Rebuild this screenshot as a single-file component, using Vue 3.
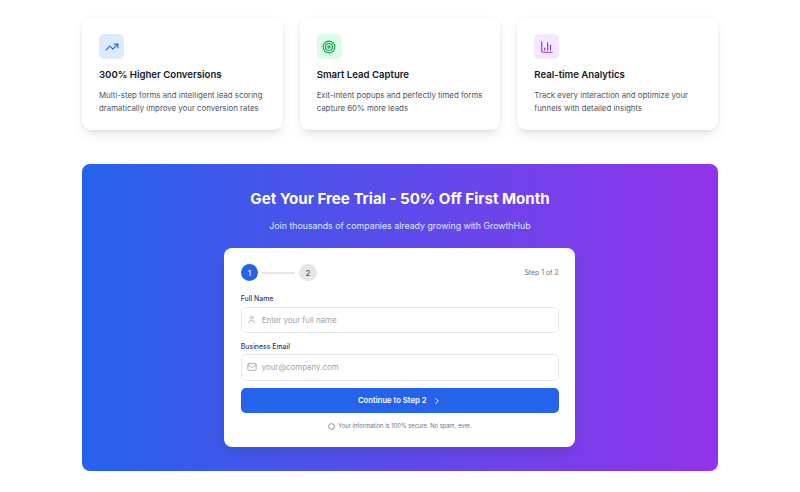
<script setup>
const features = [
  { title: '300% Higher Conversions', lines: 'Multi-step forms and intelligent lead scoring dramatically improve your conversion rates', tone: 'blue', kind: 'trend' },
  { title: 'Smart Lead Capture', lines: 'Exit-intent popups and perfectly timed forms capture 60% more leads', tone: 'green', kind: 'target' },
  { title: 'Real-time Analytics', lines: 'Track every interaction and optimize your funnels with detailed insights', tone: 'purple', kind: 'chart' }
]
</script>

<template>
  <div class="page">
    <section class="features">
      <article v-for="f in features" :key="f.title" class="card">
        <div class="icon" :class="f.tone">
          <svg v-if="f.kind === 'trend'" viewBox="0 0 24 24" width="14" height="14" fill="none" stroke="currentColor" stroke-width="2" stroke-linecap="round" stroke-linejoin="round"><path d="M22 7 13.5 15.5 8.5 10.5 2 17" /><path d="M16 7h6v6" /></svg>
          <svg v-else-if="f.kind === 'target'" viewBox="0 0 24 24" width="14" height="14" fill="none" stroke="currentColor" stroke-width="2"><circle cx="12" cy="12" r="10" /><circle cx="12" cy="12" r="6" /><circle cx="12" cy="12" r="2" /></svg>
          <svg v-else viewBox="0 0 24 24" width="14" height="14" fill="none" stroke="currentColor" stroke-width="2" stroke-linecap="round" stroke-linejoin="round"><path d="M3 3v16a2 2 0 0 0 2 2h16" /><path d="M8 17v-3" /><path d="M13 17V5" /><path d="M18 17V9" /></svg>
        </div>
        <h3>{{ f.title }}</h3>
        <p>{{ f.lines }}</p>
      </article>
    </section>

    <section class="cta">
      <h2>Get Your Free Trial - 50% Off First Month</h2>
      <p class="sub">Join thousands of companies already growing with GrowthHub</p>

      <form class="form" @submit.prevent>
        <div class="steps">
          <div class="track">
            <span class="dot on">1</span>
            <span class="line"></span>
            <span class="dot">2</span>
          </div>
          <span class="count">Step 1 of 2</span>
        </div>

        <label class="label" for="fn">Full Name</label>
        <div class="field">
          <span class="glyph">
            <svg viewBox="0 0 24 24" width="9" height="9" fill="none" stroke="currentColor" stroke-width="2" stroke-linecap="round" stroke-linejoin="round"><path d="M19 21v-2a4 4 0 0 0-4-4H9a4 4 0 0 0-4 4v2" /><circle cx="12" cy="7" r="4" /></svg>
          </span>
          <input id="fn" type="text" placeholder="Enter your full name" />
        </div>

        <label class="label" for="em">Business Email</label>
        <div class="field">
          <span class="glyph">
            <svg viewBox="0 0 24 24" width="10" height="10" fill="none" stroke="currentColor" stroke-width="2" stroke-linecap="round" stroke-linejoin="round"><rect x="2" y="4" width="20" height="16" rx="2" /><path d="m22 7-8.97 5.7a1.94 1.94 0 0 1-2.06 0L2 7" /></svg>
          </span>
          <input id="em" type="email" placeholder="your@company.com" />
        </div>

        <button type="submit" class="submit">
          Continue to Step 2
          <svg viewBox="0 0 24 24" width="10" height="10" fill="none" stroke="currentColor" stroke-width="2.4" stroke-linecap="round" stroke-linejoin="round"><path d="m9 18 6-6-6-6" /></svg>
        </button>

        <p class="note">
          <svg viewBox="0 0 24 24" width="7" height="7" fill="none" stroke="currentColor" stroke-width="2.6"><circle cx="12" cy="12" r="10" /></svg>
          Your information is 100% secure. No spam, ever.
        </p>
      </form>
    </section>
  </div>
</template>

<style>
body { background: #ffffff; }
</style>

<style scoped>
.page {
  box-sizing: border-box;
  width: 800px;
  height: 492px;
  padding: 17px 82px 0;
  font-family: Inter, "Noto Sans", sans-serif;
  background: #fff;
  overflow: hidden;
}
.features {
  display: grid;
  grid-template-columns: repeat(3, 1fr);
  gap: 17px;
}
.card {
  box-sizing: border-box;
  height: 113px;
  padding: 17px 16px 17px 17px;
  background: #fff;
  border-radius: 9px;
  box-shadow: 0 6px 12px -2px rgba(0, 0, 0, .1), 0 2px 5px -2px rgba(0, 0, 0, .06), 0 0 4px rgba(0, 0, 0, .04);
}
.icon {
  width: 25px;
  height: 25px;
  border-radius: 5px;
  display: flex;
  align-items: center;
  justify-content: center;
}
.blue { background: #dbeafe; color: #2563eb; }
.green { background: #dcfce7; color: #16a34a; }
.purple { background: #f3e8ff; color: #9333ea; }
.card h3 {
  margin: 9px 0 0;
  font-size: 9.6px;
  line-height: 14px;
  font-weight: 600;
  color: #111827;
}
.card p {
  margin: 6.5px 0 0;
  font-size: 7.85px;
  line-height: 13px;
  color: #4b5563;
}
.cta {
  box-sizing: border-box;
  margin-top: 34px;
  height: 307px;
  padding: 25px 0 0;
  border-radius: 8px;
  background: linear-gradient(to right, #2563eb, #9333ea);
  display: flex;
  flex-direction: column;
  align-items: center;
  color: #fff;
}
.cta h2 {
  margin: 0;
  font-size: 15.1px;
  line-height: 20px;
  font-weight: 700;
}
.sub {
  margin: 9px 0 0;
  font-size: 8.8px;
  line-height: 15px;
  color: #dbeafe;
}
.form {
  box-sizing: border-box;
  margin: 14.5px 0.5px 0 0;
  width: 351px;
  height: 199px;
  padding: 16.5px 16.5px 0;
  background: #fff;
  border-radius: 8px;
  box-shadow: 0 8px 12px -3px rgba(0, 0, 0, .1);
  color: #374151;
}
.steps {
  display: flex;
  align-items: center;
  justify-content: space-between;
  height: 17px;
  margin-bottom: 12px;
}
.track { display: flex; align-items: center; gap: 4px; }
.dot {
  width: 17.5px;
  height: 17.5px;
  border-radius: 50%;
  background: #e5e7eb;
  color: #4b5563;
  font-size: 7.9px;
  font-weight: 500;
  display: flex;
  align-items: center;
  justify-content: center;
}
.dot.on { background: #2563eb; color: #fff; }
.line { width: 33px; height: 2px; background: #e5e7eb; }
.count { font-size: 6.9px; color: #6b7280; }
.label {
  display: block;
  margin-bottom: 2.7px;
  font-size: 6.9px;
  line-height: 11px;
  font-weight: 500;
}
.field + .label { margin-bottom: 2.2px; }
.field {
  box-sizing: border-box;
  height: 26.5px;
  margin-bottom: 7.8px;
  padding: 0 5px;
  display: flex;
  align-items: center;
  gap: 5px;
  border: 1.5px solid #e5e7eb;
  border-radius: 5px;
  color: #9ca3af;
}
.glyph {
  flex: none;
  width: 10px;
  display: flex;
  justify-content: center;
}
.field input {
  flex: 1;
  min-width: 0;
  border: 0;
  outline: 0;
  padding: 0;
  background: transparent;
  font: 7.9px Inter, "Noto Sans", sans-serif;
  color: #111827;
}
.field input::placeholder { color: #9ca3af; opacity: 1; }
.submit {
  width: 100%;
  height: 25px;
  margin-top: 1px;
  border: 0;
  border-radius: 5px;
  background: #2563eb;
  color: #fff;
  font: 600 7.7px Inter, "Noto Sans", sans-serif;
  display: flex;
  align-items: center;
  justify-content: center;
  gap: 5px;
}
.note {
  margin: 8px 0 0;
  font-size: 5.8px;
  line-height: 10px;
  color: #6b7280;
  display: flex;
  align-items: center;
  justify-content: center;
  gap: 3px;
}
</style>
